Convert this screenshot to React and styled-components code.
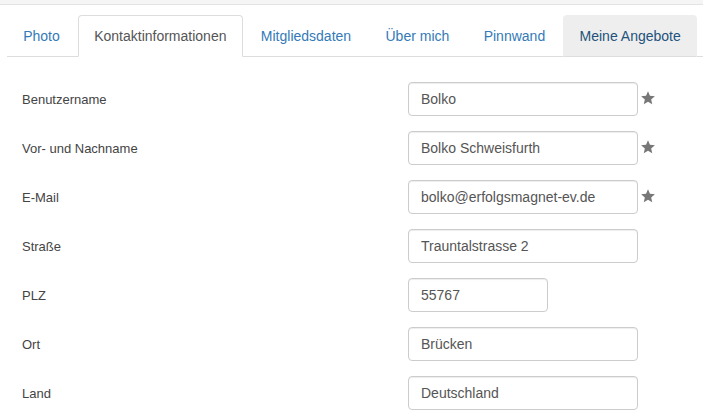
import styled, { createGlobalStyle } from 'styled-components'

const GlobalStyle = createGlobalStyle`
body {
  margin: 0;
  background: #fff;
  font-family: "Liberation Sans", Arial, sans-serif;
  font-size: 14px;
  color: #333;
}
`

const TopStrip = styled.div`
height: 4px;
background-color: #f5f5f5;
border-bottom: 1px solid #e3e3e3;
`

const Page = styled.div`
padding: 10px 0 0 7px;
`

const Tabs = styled.ul`
display: flex;
list-style: none;
margin: 0;
padding: 0;
border-bottom: 1px solid #ddd;
`

const Tab = styled.li`
margin: 0 2px -1px 0;
padding: 10px 15.2px;
line-height: 20px;
font-size: 14px;
white-space: nowrap;
cursor: pointer;
border: 1px solid transparent;
border-radius: 4px 4px 0 0;
color: #337ab7;
${props => props.$active && `
  color: #555;
  background-color: #fff;
  border-color: #ddd #ddd transparent;
`}
${props => props.$hover && `
  color: #23527c;
  background-color: #eee;
  border-color: #eee #eee #ddd;
`}
`

const Form = styled.form`
padding: 25px 15px 0;
`

const Row = styled.div`
display: flex;
align-items: center;
margin-bottom: 15px;
`

const Label = styled.label`
width: 386px;
font-size: 13px;
color: #444;
`

const Input = styled.input`
box-sizing: border-box;
width: ${props => props.$w}px;
height: 34px;
padding: 6px 12px;
font-family: inherit;
font-size: 14px;
color: #555;
background: #fff;
border: 1px solid #ccc;
border-radius: 4px;
box-shadow: inset 0 1px 1px rgba(0, 0, 0, .075);
outline: none;
`

const Star = styled.svg`
width: 14px;
height: 14px;
margin: -3px 0 0 3px;
fill: #777;
`

const fields = [
  { label: 'Benutzername', value: 'Bolko', req: true },
  { label: 'Vor- und Nachname', value: 'Bolko Schweisfurth', req: true },
  { label: 'E-Mail', value: 'bolko@erfolgsmagnet-ev.de', req: true },
  { label: 'Straße', value: 'Trauntalstrasse 2' },
  { label: 'PLZ', value: '55767', w: 140 },
  { label: 'Ort', value: 'Brücken' },
  { label: 'Land', value: 'Deutschland' },
]

function App() {
  return (<>
    <GlobalStyle />
    <TopStrip />
    <Page>
      <Tabs>
        <Tab>Photo</Tab>
        <Tab $active>Kontaktinformationen</Tab>
        <Tab>Mitgliedsdaten</Tab>
        <Tab>Über mich</Tab>
        <Tab>Pinnwand</Tab>
        <Tab $hover>Meine Angebote</Tab>
      </Tabs>
      <Form>
        {fields.map(f => (
          <Row key={f.label}>
            <Label>{f.label}</Label>
            <Input $w={f.w || 230} value={f.value} readOnly />
            {f.req && (
              <Star viewBox="0 0 24 24">
                <polygon points="12,0.5 15.3,8.3 23.8,9 17.4,14.6 19.3,22.9 12,18.5 4.7,22.9 6.6,14.6 0.2,9 8.7,8.3" />
              </Star>
            )}
          </Row>
        ))}
      </Form>
    </Page>
  </>)
}

export default App
